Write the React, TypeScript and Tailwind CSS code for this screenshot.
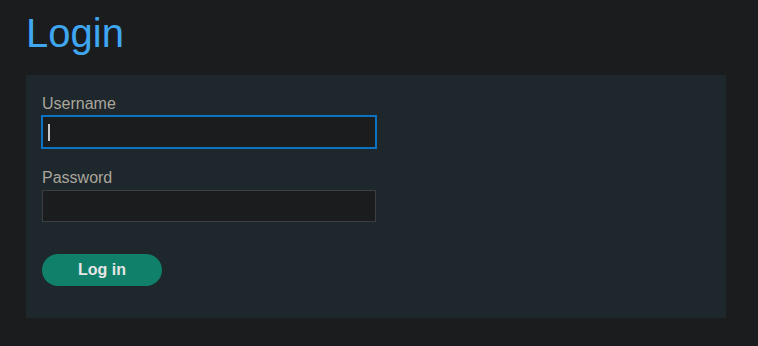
export default function App() {
  return (
    <div
      className="min-h-screen bg-[#1b1c1e] px-[26px] pt-[6px] pb-[28px]"
      style={{ fontFamily: '"Liberation Sans", Arial, sans-serif' }}
    >
      <h1 className="text-[40px] leading-[54px] text-[#3fa6f2] mb-[15px]">Login</h1>

      <div className="w-[700px] bg-[#1e272c] px-4 pt-[18px] pb-8">
        <form className="flex flex-col" onSubmit={(e) => e.preventDefault()}>
          <label className="text-[16px] leading-[22px] text-[#aaa69c]">Username</label>
          <div className="relative w-[334px] mt-[1px]">
            <input
              type="text"
              className="w-full h-8 bg-[#1b1c1e] border border-[#0c72c2] outline outline-[#0c72c2] outline-1 text-[#ddd] px-2"
            />
            {/* caret */}
            <span className="absolute left-[6px] top-[8px] w-[2px] h-[17px] bg-[#c8c8c8]"></span>
          </div>

          <label className="text-[16px] leading-[22px] text-[#aaa69c] mt-[19px]">Password</label>
          <input
            type="password"
            className="w-[334px] h-8 mt-[1px] bg-[#1b1c1e] border border-[#3b4142] outline-none px-2"
          />

          <button
            type="submit"
            className="mt-8 w-[120px] h-8 rounded-full bg-[#11806a] text-[#e6e6e6] font-bold text-[16px]"
          >
            Log in
          </button>
        </form>
      </div>
    </div>
  );
}
